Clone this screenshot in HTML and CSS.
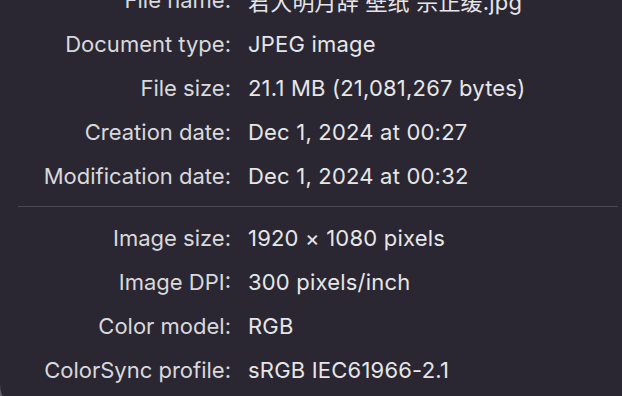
FILE: index.html
```html
<!DOCTYPE html>
<html lang="en">
<head>
  <meta charset="UTF-8">
  <title>Info</title>
  <link rel="stylesheet" href="styles.css">
</head>
<body>
  <div class="window">
    <div class="info">
      <div class="label">File name:</div>
      <div class="value">君大明月辞 壁纸 宗正缓.jpg</div>

      <div class="label">Document type:</div>
      <div class="value">JPEG image</div>

      <div class="label">File size:</div>
      <div class="value">21.1 MB (21,081,267 bytes)</div>

      <div class="label">Creation date:</div>
      <div class="value">Dec 1, 2024 at 00:27</div>

      <div class="label">Modification date:</div>
      <div class="value">Dec 1, 2024 at 00:32</div>
    </div>

    <hr class="divider">

    <div class="info">
      <div class="label">Image size:</div>
      <div class="value">1920 × 1080 pixels</div>

      <div class="label">Image DPI:</div>
      <div class="value">300 pixels/inch</div>

      <div class="label">Color model:</div>
      <div class="value">RGB</div>

      <div class="label">ColorSync profile:</div>
      <div class="value">sRGB IEC61966-2.1</div>
    </div>
  </div>
</body>
</html>
```

FILE: styles.css
```css
html, body {
  margin: 0;
  padding: 0;
  overflow: hidden;
}

body {
  background-color: #5f5e62;
  font-family: Inter, "Noto Sans CJK SC", sans-serif;
  width: 622px;
  height: 396px;
}

.window {
  background-color: #2a2733;
  height: 436px;
  border-bottom-left-radius: 30px;
  margin-top: -22px;
}

.info {
  display: grid;
  grid-template-columns: 231px 1fr;
  column-gap: 17px;
  grid-auto-rows: 44px;
  align-items: center;
}

.label {
  text-align: right;
  color: #d9d9dc;
  font-size: 22px;
}

.value {
  color: #e6e6e8;
  font-size: 22px;
  letter-spacing: 0.2px;
}

.divider {
  border: none;
  height: 1px;
  background-color: #4a4855;
  margin: 8px 4px 9px 18px;
}
```
